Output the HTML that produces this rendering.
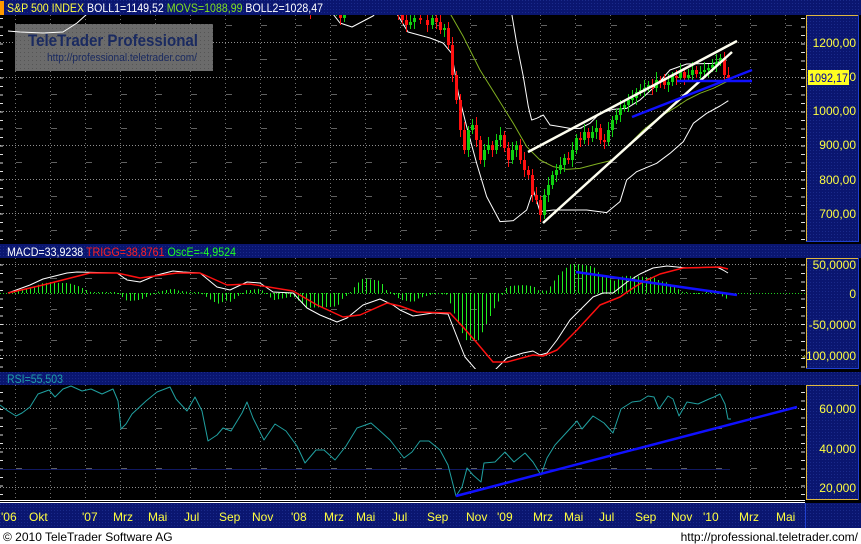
<!DOCTYPE html>
<html><head><meta charset="utf-8">
<style>
html,body{margin:0;padding:0;background:#000;}
body{width:861px;height:544px;overflow:hidden;position:relative;font-family:"Liberation Sans",sans-serif;}
svg{position:absolute;left:0;top:0;}
text{font-family:"Liberation Sans",sans-serif;}
</style></head>
<body>
<svg id="s" width="861" height="544" viewBox="0 0 861 544" xmlns="http://www.w3.org/2000/svg">
<defs>
<pattern id="dots" width="3" height="3" patternUnits="userSpaceOnUse"><rect width="3" height="3" fill="#0a1670"/><rect width="1" height="1" fill="#1a2a8a"/></pattern>
<pattern id="wdots" width="4" height="4" patternUnits="userSpaceOnUse"><rect width="4" height="4" fill="#6b6b6b"/><rect width="1" height="1" fill="#555"/></pattern>
</defs>
<rect width="861" height="544" fill="#000"/>
<rect x="0" y="0" width="861" height="15" fill="url(#dots)"/>
<rect x="0" y="1" width="4" height="14" fill="#ff9a00"/>
<text x="7" y="12" font-size="12" textLength="316" lengthAdjust="spacingAndGlyphs"><tspan fill="#ffff40">S&amp;P 500 INDEX</tspan><tspan fill="#fff"> BOLL1=1149,52 </tspan><tspan fill="#80e020">MOVS=1088,99</tspan><tspan fill="#fff"> BOLL2=1028,47</tspan></text>
<rect x="0" y="244" width="861" height="14" fill="url(#dots)"/>
<text x="7" y="256" font-size="12" textLength="229" lengthAdjust="spacingAndGlyphs"><tspan fill="#fff">MACD=33,9238 </tspan><tspan fill="#ff2020">TRIGG=38,8761 </tspan><tspan fill="#20ff20">OscE=-4,9524</tspan></text>
<rect x="0" y="372" width="861" height="13" fill="url(#dots)"/>
<text x="7" y="383" font-size="12" fill="#20a0a8" textLength="56" lengthAdjust="spacingAndGlyphs">RSI=55,503</text>
<g id="grid"></g>
<rect x="15" y="24" width="198" height="47" fill="url(#wdots)"/>
<text x="28" y="46" font-size="17" font-weight="bold" fill="#1a2a60" textLength="170" lengthAdjust="spacingAndGlyphs">TeleTrader Professional</text>
<text x="47" y="61" font-size="11" fill="#1a2a60" textLength="150" lengthAdjust="spacingAndGlyphs">http://professional.teletrader.com/</text>
<g id="main"></g>
<rect x="806.5" y="15.5" width="52" height="226" fill="url(#dots)" stroke="#e0b840"/>
<line x1="858.5" y1="15" x2="858.5" y2="242" stroke="#2040d0"/>
<line x1="806" y1="241.5" x2="859" y2="241.5" stroke="#2040d0"/>
<rect x="806.5" y="258.5" width="52" height="110" fill="url(#dots)" stroke="#e0b840"/>
<line x1="858.5" y1="258" x2="858.5" y2="369" stroke="#2040d0"/>
<line x1="806" y1="368.5" x2="859" y2="368.5" stroke="#2040d0"/>
<rect x="806.5" y="385.5" width="52" height="114" fill="url(#dots)" stroke="#e0b840"/>
<line x1="858.5" y1="385" x2="858.5" y2="500" stroke="#2040d0"/>
<g font-size="12" fill="#ffff40" text-anchor="end">
<text x="856" y="47">1200,00</text><text x="856" y="81">1100,00</text><text x="856" y="115">1000,00</text>
<text x="856" y="149">900,00</text><text x="856" y="184">800,00</text><text x="856" y="218">700,00</text>
<text x="856" y="269">50,0000</text><text x="856" y="298">0</text><text x="856" y="329">-50,0000</text><text x="856" y="360">-100,0000</text>
<text x="856" y="413">60,000</text><text x="856" y="453">40,000</text><text x="856" y="492">20,000</text>
</g>
<rect x="808" y="70" width="41" height="15" fill="#ffff20"/>
<text x="809" y="82" font-size="12" fill="#0000a0" textLength="39" lengthAdjust="spacingAndGlyphs">1092,17</text>
<line x1="0" y1="500.5" x2="805" y2="500.5" stroke="#fff"/>
<line x1="0" y1="502.5" x2="805" y2="502.5" stroke="#fff"/>
<rect x="0" y="503" width="861" height="25" fill="url(#dots)"/>
<line x1="805.5" y1="503" x2="805.5" y2="528" stroke="#2040d0"/>
<g font-size="12" fill="#ffff40" id="dates"></g>
<rect x="0" y="528" width="861" height="16" fill="#fff"/>
<text x="3" y="541" font-size="12" fill="#000">© 2010 TeleTrader Software AG</text>
<text x="858" y="541" font-size="12" fill="#000" text-anchor="end">http://professional.teletrader.com/</text>
</svg>
<script>
var NS="http://www.w3.org/2000/svg";
function el(p,t,a){var e=document.createElementNS(NS,t);for(var k in a)e.setAttribute(k,a[k]);p.appendChild(e);return e;}
var g=document.getElementById('grid'),m=document.getElementById('main');
for(var x=785;x>5;x-=35){
 [[15,241],[258,368],[385,500]].forEach(function(r){el(g,'line',{x1:x+.5,y1:r[0],x2:x+.5,y2:r[1],stroke:'#707070','stroke-dasharray':'1 3'});});
}
function hl(y,dash){el(g,'line',{x1:0,y1:y+.5,x2:805,y2:y+.5,stroke:dash?'#606060':'#909090','stroke-dasharray':dash?'6 29':'1 2','stroke-dashoffset':dash?'-16':'0'});}
[42,77,111,145,179,213].forEach(function(y){hl(y);});
[25,59,94,128,162,196,230].forEach(function(y){hl(y,1);});
[264,293,324,355].forEach(function(y){hl(y);});
[278,309,340].forEach(function(y){hl(y,1);});
[408,448,487].forEach(function(y){hl(y);});
[428,468].forEach(function(y){hl(y,1);});
for(var y=18;y<500;y+=8.5){if((y>241&&y<258)||(y>368&&y<385))continue;el(g,'rect',{x:0,y:y,width:3,height:1,fill:'#ddd'});el(g,'rect',{x:801,y:y,width:4,height:1,fill:'#ddd'});}
function pl(p,pts,c,w){el(p,'polyline',{points:pts.map(function(a){return a.join(',');}).join(' '),fill:'none',stroke:c,'stroke-width':w||1,'stroke-linejoin':'round'});}
function Z(pts,ox,oy,sx,sy){return pts.map(function(a){return[ox+a[0]/sx,oy+a[1]/sy];});}
var cp=document.createElementNS(NS,'clipPath');cp.id='c1';document.getElementById('s').appendChild(cp);el(cp,'rect',{x:0,y:15,width:805,height:227});
var mc=el(m,'g',{'clip-path':'url(#c1)'});
pl(mc,[[8,31],[20,32],[43,33],[63,32],[77,23],[87,14]],'#fff');
pl(mc,[[333,14],[340,23],[352,27],[373,16],[376,13]],'#fff');
pl(mc,[[397,14],[408,32],[430,38],[443,43]].concat(Z([[190,100],[215,130],[235,250],[260,350],[290,460],[320,560],[360,635],[400,632],[440,600],[460,540],[480,605],[520,600],[560,600],[620,600],[680,608],[720,575],[740,510],[770,485],[830,460],[870,430],[910,395],[940,340],[980,310],[1020,288],[1045,272]],380,10,3,3)),'#fff');
pl(mc,Z([[395,10],[410,100],[430,200],[445,290],[455,330],[470,325],[490,315],[510,345],[540,350],[570,355],[600,355],[630,340],[660,310],[700,298],[740,295],[780,270],[830,225],[870,180],[920,162],[1000,160],[1040,150]],380,10,3,3),'#fff');
pl(mc,Z([[210,10],[250,80],[300,180],[350,260],[400,340],[440,410],[480,450],[520,470],[560,478],[600,475],[650,462],[700,450],[740,410],[790,360],[840,320],[890,290],[920,270],[960,250],[1000,235],[1040,215]],380,10,3,3),'#80b020');
var C=[[300,10],[310,12],[336,10],[340,18],[344,12],[398,12],[402,20],[406,25],[410,22],[414,18],[420,20],[427,25],[432,18],[436,22],[440,30],[444,28],[448,45],[452,75],[456,100],[460,130],[464,150],[468,130],[472,125],[476,140],[480,160],[484,150],[488,145],[492,150],[496,140],[500,135],[504,148],[508,160],[512,150],[516,145],[520,160],[524,170],[528,175],[532,195],[536,200],[540,215],[544,195],[548,185],[552,175],[556,170],[560,165],[564,158],[568,160],[572,150],[576,138],[580,140],[584,132],[588,138],[592,132],[596,128],[600,140],[604,142],[608,130],[612,120],[616,115],[620,108],[624,105],[628,100],[632,98],[636,92],[640,90],[644,88],[648,85],[652,88],[656,80],[660,80],[664,85],[668,82],[672,76],[676,78],[680,72],[684,78],[688,75],[692,70],[696,74],[700,72],[704,70],[708,68],[712,65],[716,62],[720,58],[724,75],[728,78]];
for(var i=1;i<C.length;i++){var o=C[i-1][1],c=C[i][1],x=C[i][0],up=c<o,col=up?'#10d010':'#ff1010';
 var t=Math.min(o,c),b=Math.max(o,c);if(b-t<1)b=t+1;
 el(mc,'line',{x1:x+.5,y1:t-4-(i%3)*2,x2:x+.5,y2:b+4+(i%2)*3,stroke:col});
 el(mc,'rect',{x:x-1,y:t,width:3,height:b-t,fill:col});}
el(mc,'line',{x1:528,y1:152,x2:737,y2:41,stroke:'#fffff0','stroke-width':2.5});
el(mc,'line',{x1:543,y1:223,x2:732,y2:52,stroke:'#fffff0','stroke-width':2.5});
el(mc,'line',{x1:632,y1:117,x2:752,y2:70,stroke:'#1010ff','stroke-width':2.5});
el(mc,'line',{x1:677,y1:81,x2:752,y2:81,stroke:'#1010ff','stroke-width':2.5});
var cp2=document.createElementNS(NS,'clipPath');cp2.id='c2';document.getElementById('s').appendChild(cp2);el(cp2,'rect',{x:0,y:258,width:805,height:111});
var mg=el(m,'g',{'clip-path':'url(#c2)'});
var W=[[8,293],[30,285],[43,279],[67,273],[77,272],[117,273],[127,280],[140,282],[157,275],[173,271],[183,272],[200,273],[217,287],[230,290],[247,282],[260,283],[273,292],[293,293],[307,308],[320,315],[337,322],[347,318],[363,305],[380,299],[393,305],[400,310],[413,316],[433,313],[448,314],[457,337],[465,357],[478,372],[493,372],[507,358],[523,353],[533,351],[540,355],[547,353],[557,340],[570,320],[580,310],[593,297],[603,293],[613,293],[627,282],[640,274],[653,268],[667,266],[687,268],[717,267],[723,270],[728,273]];
var R=[[8,293],[43,285],[90,273],[117,273],[140,278],[177,273],[200,273],[227,285],[250,284],[293,291],[317,305],[343,317],[360,315],[387,303],[400,306],[417,312],[450,313],[463,327],[477,343],[493,362],[507,362],[533,355],[543,356],[557,350],[577,330],[600,305],[620,297],[633,288],[643,282],[660,274],[683,268],[720,267],[728,269]];
function interp(P,x){for(var i=1;i<P.length;i++){if(x<=P[i][0]){var a=P[i-1],b=P[i];return a[1]+(b[1]-a[1])*(x-a[0])/(b[0]-a[0]);}}return P[P.length-1][1];}
for(var x=10;x<=728;x+=4){var h=(interp(R,x)-interp(W,x))*1.7;if(Math.abs(h)<1)h=h<0?-1:1;
 el(mg,'line',{x1:x+.5,y1:293,x2:x+.5,y2:293-h,stroke:'#20f020'});}
el(mg,'line',{x1:0,y1:293.5,x2:805,y2:293.5,stroke:'#20d020','stroke-dasharray':'1 2'});
pl(mg,W,'#fff');pl(mg,R,'#ff1010',1.5);
el(mg,'line',{x1:576,y1:272,x2:737,y2:295,stroke:'#1010ff','stroke-width':2.5});
var rg=el(m,'g',{});
el(rg,'line',{x1:0,y1:469.5,x2:730,y2:469.5,stroke:'#101860'});
pl(rg,[[0,405],[8,411],[16,416],[22,413],[30,407],[38,394],[49,390],[55,397],[63,389],[71,386],[82,391],[91,389],[102,394],[113,389],[118,401],[121,429],[126,424],[132,414],[146,401],[157,392],[170,387],[176,399],[187,411],[195,397],[202,411],[208,441],[217,435],[223,428],[231,431],[242,413],[247,402],[253,418],[264,440],[275,424],[286,431],[297,446],[305,463],[316,450],[324,450],[335,460],[346,446],[357,428],[371,423],[379,430],[390,440],[404,458],[412,452],[420,441],[429,441],[440,450],[448,465],[456,496],[462,487],[467,468],[473,475],[481,482],[484,463],[495,462],[505,452],[514,462],[525,453],[533,462],[541,475],[547,458],[555,445],[566,433],[577,421],[582,429],[593,416],[604,423],[613,433],[621,409],[632,402],[640,401],[648,396],[654,397],[659,409],[668,396],[673,399],[679,416],[687,402],[698,404],[709,399],[714,397],[720,394],[725,404],[728,419],[731,419]],'#20a0a0');
el(rg,'line',{x1:456,y1:496,x2:797,y2:407,stroke:'#1010ff','stroke-width':2.5});
var D=[["'06",1],["Okt",29],["'07",82],["Mrz",113],["Mai",148],["Jul",184],["Sep",219],["Nov",252],["'08",291],["Mrz",324],["Mai",356],["Jul",392],["Sep",427],["Nov",466],["'09",497],["Mrz",533],["Mai",564],["Jul",599],["Sep",635],["Nov",671],["'10",703],["Mrz",739],["Mai",776]];
var dg=document.getElementById('dates');D.forEach(function(d){var t=el(dg,'text',{x:d[1],y:521});t.textContent=d[0];});
</script>
</body></html>
